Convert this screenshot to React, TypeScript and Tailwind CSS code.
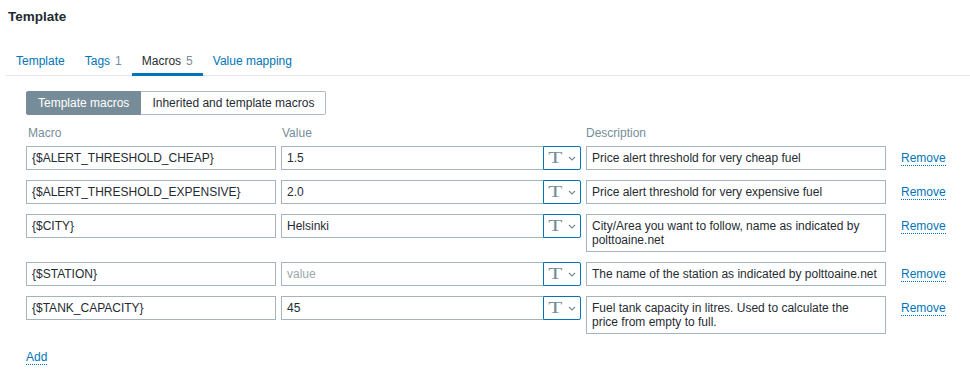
import { useState } from 'react';

type Macro = {
  macro: string;
  value: string;
  description: string;
};

// descriptions wrap like the textarea in the original form
const macros: Macro[] = [
  { macro: '{$ALERT_THRESHOLD_CHEAP}', value: '1.5', description: 'Price alert threshold for very cheap fuel' },
  { macro: '{$ALERT_THRESHOLD_EXPENSIVE}', value: '2.0', description: 'Price alert threshold for very expensive fuel' },
  { macro: '{$CITY}', value: 'Helsinki', description: 'City/Area you want to follow, name as indicated by\npolttoaine.net' },
  { macro: '{$STATION}', value: '', description: 'The name of the station as indicated by polttoaine.net' },
  { macro: '{$TANK_CAPACITY}', value: '45', description: 'Fuel tank capacity in litres. Used to calculate the\nprice from empty to full.' },
];

const tabs = [
  { label: 'Template' },
  { label: 'Tags', count: 1 },
  { label: 'Macros', count: 5 },
  { label: 'Value mapping' },
];

function MacroRow({ row }: { row: Macro }) {
  return (
    <div className="flex items-start gap-[5px]">
      <div className="w-[250px] h-[24px] border border-[#a5b4bb] px-[5px] leading-[22px] truncate">{row.macro}</div>
      <div className="flex w-[300px] h-[24px]">
        <div className="flex-1 border border-r-0 border-[#a5b4bb] px-[5px] leading-[22px]">
          {row.value ? row.value : <span className="text-[#9aa7ae]">value</span>}
        </div>
        <div className="w-[38px] border border-[#0275b8] rounded-r-[2px] flex items-center justify-center gap-[4px] pl-[2px]">
          <span className="inline-block scale-x-[1.35] font-['Liberation_Serif',serif] text-[17px] leading-[18px] text-[#768d99]">T</span>
          <svg width="8" height="5" viewBox="0 0 8 5" className="ml-[3px]">
            <polyline points="1,1 4,4 7,1" fill="none" stroke="#768d99" strokeWidth="1.2" />
          </svg>
        </div>
      </div>
      <div className="w-[300px] border border-[#a5b4bb] px-[5px] py-[4px] leading-[14px] whitespace-pre-line">{row.description}</div>
      <a className="ml-[10px] mt-[5px] leading-[14px] text-[#0275b8] border-b border-dotted border-[#0275b8] cursor-pointer">Remove</a>
    </div>
  );
}

export default function App() {
  const [tab, setTab] = useState('Macros');
  const [mode, setMode] = useState('template');

  return (
    <div className="w-[970px] h-[372px] bg-white font-['Liberation_Sans',Arial,sans-serif] text-[12px] text-[#1f2c33] overflow-hidden">
      <h1 className="pl-[8px] pt-[9px] text-[13.5px] font-bold leading-[16px]">Template</h1>

      <div className="ml-[6px] mt-[21px] flex border-b border-[#e4e8eb]">
        {tabs.map((t) => {
          const active = tab === t.label;
          return (
            <button
              key={t.label}
              onClick={() => setTab(t.label)}
              className={
                active
                  ? 'px-[10px] pt-[8px] pb-[5px] leading-[14px] border-b-[3px] border-[#0275b8] mb-[-1px] text-[#1f2c33]'
                  : 'px-[10px] pt-[8px] pb-[5px] leading-[14px] border-b-[3px] border-transparent mb-[-1px] text-[#0275b8]'
              }
            >
              {t.label}
              {t.count !== undefined && <span className="ml-[5px] text-[#768d99]">{t.count}</span>}
            </button>
          );
        })}
      </div>

      <div className="ml-[6px] pl-[20px] pt-[15px]">
        <div className="flex h-[24px]">
          <button
            onClick={() => setMode('template')}
            className={
              mode === 'template'
                ? 'px-[11px] bg-[#768d99] border border-[#768d99] text-white rounded-l-[2px]'
                : 'px-[11px] bg-white border border-[#acbbc2] text-[#1f2c33] rounded-l-[2px]'
            }
          >
            Template macros
          </button>
          <button
            onClick={() => setMode('inherited')}
            className={
              mode === 'inherited'
                ? 'px-[11px] bg-[#768d99] border border-[#768d99] text-white rounded-r-[2px]'
                : 'px-[11px] bg-white border border-l-0 border-[#acbbc2] text-[#1f2c33] rounded-r-[2px]'
            }
          >
            Inherited and template macros
          </button>
        </div>

        <div className="flex gap-[5px] mt-[11px] leading-[14px] text-[#768d99]">
          <div className="w-[250px] pl-[2px]">Macro</div>
          <div className="w-[300px] pl-[1px]">Value</div>
          <div className="w-[300px]">Description</div>
        </div>

        <div className="mt-[6px] flex flex-col gap-[10px]">
          {macros.map((m) => (
            <MacroRow key={m.macro} row={m} />
          ))}
        </div>

        <div className="mt-[14px]">
          <a className="leading-[14px] text-[#0275b8] border-b border-dotted border-[#0275b8] cursor-pointer">Add</a>
        </div>
      </div>
    </div>
  );
}
